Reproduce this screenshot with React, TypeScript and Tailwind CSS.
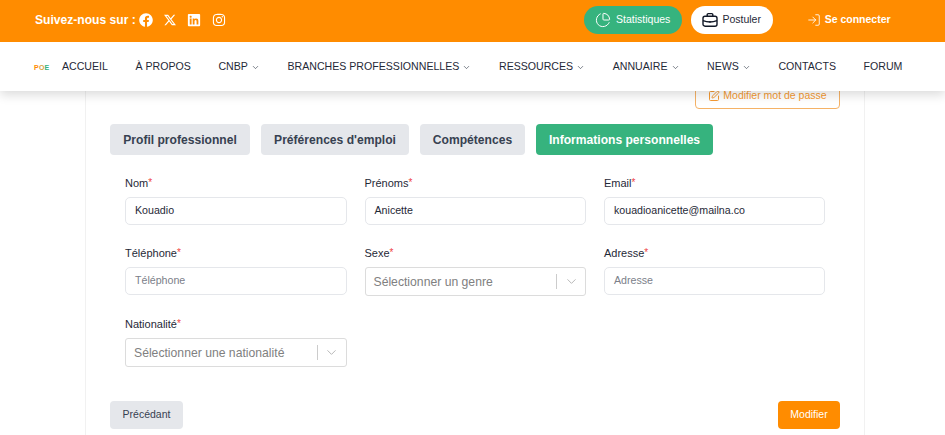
import { ChartPie, ChevronDown, LogIn, SquarePen } from "lucide-react";
import { FaFacebook, FaInstagram, FaLinkedin } from "react-icons/fa";
import { RiTwitterXLine } from "react-icons/ri";

const navItems = [
    { label: "ACCUEIL" },
    { label: "À PROPOS" },
    { label: "CNBP", menu: true },
    { label: "BRANCHES PROFESSIONNELLES", menu: true },
    { label: "RESSOURCES", menu: true },
    { label: "ANNUAIRE", menu: true },
    { label: "NEWS", menu: true },
    { label: "CONTACTS" },
    { label: "FORUM" },
];

function Briefcase() {
    return (
        <svg width="16" height="16" viewBox="0 0 16 16" fill="none" stroke="#111827" strokeWidth="1.4">
            <rect x="1" y="4.2" width="14" height="10" rx="2" />
            <path d="M5.2 4V2.6a1 1 0 0 1 1-1h3.6a1 1 0 0 1 1 1V4" />
            <path d="M1 8.6c4 1.6 10 1.6 14 0" />
            <path d="M8 9v1.4" />
        </svg>
    );
}

function Label({ children }: { children: string }) {
    return (
        <label className="mb-[7px] block h-[15px] text-[11px] leading-[15px] text-[#1f2937]">
            {children}
            <span className="align-[1px] text-[10px] text-[#ef4444]">*</span>
        </label>
    );
}

function TextField({ label, value, placeholder }: { label: string; value?: string; placeholder?: string }) {
    return (
        <div>
            <Label>{label}</Label>
            <div className="flex h-[28px] items-center rounded-[5px] border border-[#e5e7eb] bg-white px-[9px] text-[10.65px]">
                {value ? (
                    <span className="text-[#1f2937]">{value}</span>
                ) : (
                    <span className="text-[#7b8089]">{placeholder}</span>
                )}
            </div>
        </div>
    );
}

function SelectField({ label, placeholder }: { label: string; placeholder: string }) {
    return (
        <div>
            <Label>{label}</Label>
            <div className="flex h-[29px] items-center rounded-[3px] border border-[#dcdcdc] bg-white pl-[8px] text-[12.2px] text-[#808080]">
                <span className="flex-1 pt-[1px]">{placeholder}</span>
                <span className="h-[15px] w-px bg-[#cccccc]" />
                <span className="flex w-[28px] justify-center">
                    <ChevronDown size={15} strokeWidth={1.5} color="#b3b3b3" />
                </span>
            </div>
        </div>
    );
}

export default function App() {
    return (
        <div className="h-[435px] w-[945px] overflow-hidden bg-white font-['Liberation_Sans',sans-serif]">
            <header className="relative z-10 shadow-[0_4px_10px_rgba(0,0,0,0.14)]">
                <div className="flex h-[42px] items-center bg-[#ff8c00] pb-[2px] pl-[35px] text-white">
                    <span className="text-[12.1px] font-bold">Suivez-nous sur :</span>
                    <div className="ml-[3px] flex items-center gap-[10.3px]">
                        <FaFacebook size={14} />
                        <RiTwitterXLine size={14} />
                        <FaLinkedin size={14} />
                        <FaInstagram size={14} />
                    </div>
                    <button className="mb-[1px] ml-[358px] flex h-[28px] w-[98px] items-center justify-center gap-[5px] rounded-full bg-[#36b37e] text-[10.5px] text-white">
                        <ChartPie size={16} strokeWidth={1.5} />
                        Statistiques
                    </button>
                    <button className="mb-[1px] ml-[9px] flex h-[28px] w-[82px] items-center justify-center gap-[4px] rounded-full bg-white text-[10.5px] text-[#1f2937]">
                        <Briefcase />
                        Postuler
                    </button>
                    <span className="ml-[34px] flex items-center gap-[4px] text-[10.5px] font-bold">
                        <LogIn size={14} strokeWidth={1.5} />
                        Se connecter
                    </span>
                </div>
                <nav className="flex h-[49px] items-center border-t border-white bg-white pl-[34px] text-[10.6px] text-[#1f2937]">
                    <span className="mr-[11px] w-[17px] text-[7px] font-bold leading-none tracking-[0.2px]">
                        <span className="text-[#ff8c00]">P</span>
                        <span className="text-[#d9a441]">O</span>
                        <span className="text-[#36b37e]">E</span>
                    </span>
                    <div className="flex items-center gap-[27.6px]">
                        {navItems.map((item) => (
                            <span key={item.label} className="flex items-center gap-[3px]">
                                {item.label}
                                {item.menu && <ChevronDown size={9} strokeWidth={1.5} className="mt-[2px]" />}
                            </span>
                        ))}
                    </div>
                </nav>
            </header>
            <main className="mx-[85px] h-[400px] w-[780px] border-x border-[#f1f1f1] px-[24px]">
                <div className="-mt-[9px] flex justify-end">
                    <button className="flex h-[27px] w-[145px] items-center justify-center gap-[3px] rounded-[4px] border border-[#f5b266] text-[10.5px] text-[#f59a33]">
                        <SquarePen size={12} />
                        Modifier mot de passe
                    </button>
                </div>
                <div className="mt-[15px] flex gap-[11px] text-[12.1px] font-bold">
                    <span className="flex h-[31px] w-[140px] items-center justify-center rounded-[4px] bg-[#e5e7eb] pt-[1px] text-[#374151]">
                        Profil professionnel
                    </span>
                    <span className="flex h-[31px] w-[148px] items-center justify-center rounded-[4px] bg-[#e5e7eb] pt-[1px] text-[#374151]">
                        Préférences d'emploi
                    </span>
                    <span className="flex h-[31px] w-[105px] items-center justify-center rounded-[4px] bg-[#e5e7eb] pt-[1px] text-[#374151]">
                        Compétences
                    </span>
                    <span className="flex h-[31px] w-[177px] items-center justify-center rounded-[4px] bg-[#36b37e] pt-[1px] text-white">
                        Informations personnelles
                    </span>
                </div>
                <div className="mx-[15px] mt-[20px] grid grid-cols-[221.5px_221.5px_221px] gap-x-[18px] gap-y-[20px]">
                    <TextField label="Nom" value="Kouadio" />
                    <TextField label="Prénoms" value="Anicette" />
                    <TextField label="Email" value="kouadioanicette@mailna.co" />
                    <TextField label="Téléphone" placeholder="Téléphone" />
                    <SelectField label="Sexe" placeholder="Sélectionner un genre" />
                    <TextField label="Adresse" placeholder="Adresse" />
                    <SelectField label="Nationalité" placeholder="Sélectionner une nationalité" />
                </div>
                <div className="mt-[34px] flex justify-between">
                    <button className="h-[28px] w-[73px] rounded-[4px] bg-[#e5e7eb] text-[10.5px] text-[#374151]">
                        Précédant
                    </button>
                    <button className="h-[28px] w-[62px] rounded-[4px] bg-[#ff8c00] text-[10.5px] text-white">
                        Modifier
                    </button>
                </div>
            </main>
        </div>
    );
}
